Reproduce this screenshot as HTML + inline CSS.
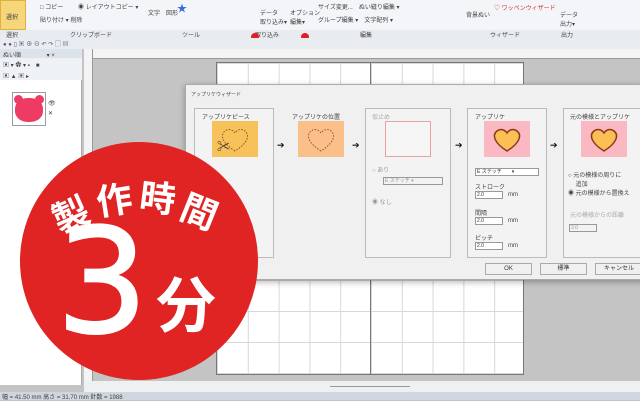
<!DOCTYPE html>
<html><head><meta charset="utf-8"><style>
*{margin:0;padding:0;box-sizing:border-box}
body{width:640px;height:400px;overflow:hidden;background:#c4c4c4;font-family:"Liberation Sans","Noto Sans CJK JP",sans-serif;position:relative;font-size:7px;color:#333}
.a{position:absolute}
.t{font-size:6px;color:#444;white-space:nowrap}
.panel{position:absolute;top:108px;height:150px;border:1px solid #bbb;background:#f3f3f3}
.img{position:absolute;width:46px;height:36px}
.arrow{position:absolute;top:140px;font-size:9px;color:#111}
.inp{position:absolute;width:28px;height:8px;background:#fff;border:1px solid #999;font-size:5px;line-height:7px;padding-left:1px}
.btn{position:absolute;top:263px;height:12px;border:1px solid #aaa;background:#f0f0f0;font-size:6px;text-align:center;line-height:10px}
.k{position:absolute;width:44px;height:44px;margin:-22px 0 0 -22px;text-align:center;line-height:44px;color:#fff;font-family:'Noto Sans CJK JP',sans-serif;font-weight:bold;font-size:36px}
</style></head><body>
<!-- ribbon -->
<div class="a" style="left:0;top:0;width:640px;height:38px;background:#f3f5f8;border-bottom:1px solid #c8ccd2"></div>
<div class="a" style="left:0;top:0;width:26px;height:30px;background:#f7d57a;border:1px solid #e0b040"></div>
<div class="a t" style="left:6px;top:12px">選択</div>
<div class="a" style="left:0;top:30px;width:640px;height:8px;background:#e8ebef"></div>
<div class="a t" style="left:6px;top:30px">選択</div>
<div class="a t" style="left:70px;top:30px">クリップボード</div>
<div class="a t" style="left:182px;top:30px">ツール</div>
<div class="a t" style="left:255px;top:30px">取り込み</div>
<div class="a t" style="left:360px;top:30px">編集</div>
<div class="a t" style="left:490px;top:30px">ウィザード</div>
<div class="a t" style="left:561px;top:30px">出力</div>
<div class="a t" style="left:40px;top:2px">□ コピー</div>
<div class="a t" style="left:78px;top:2px">◉ レイアウトコピー ▾</div>
<div class="a t" style="left:40px;top:15px">貼り付け ▾ 削除</div>
<div class="a t" style="left:148px;top:8px">文字　図形</div>
<div class="a" style="left:177px;top:0;color:#3a6fd8;font-size:10px">★</div>
<div class="a t" style="left:260px;top:8px">データ<br>取り込み▾</div>
<div class="a t" style="left:290px;top:8px">オプション<br>編集▾</div>
<div class="a t" style="left:318px;top:2px">サイズ変更...　ぬい縫り編集 ▾</div>
<div class="a t" style="left:318px;top:15px">グループ編集 ▾　文字配列 ▾</div>
<div class="a t" style="left:466px;top:10px">背景ぬい</div>
<div class="a t" style="left:494px;top:3px;color:#c33">♡ ワッペンウィザード</div>
<div class="a t" style="left:560px;top:10px">データ<br>出力▾</div>
<div class="a" style="left:251px;top:33px;width:8px;height:8px;border-radius:50%;background:#e02020"></div>
<div class="a" style="left:301px;top:33px;width:8px;height:8px;border-radius:50%;background:#e02020"></div>
<!-- toolbar -->
<div class="a" style="left:0;top:38px;width:640px;height:11px;background:#e9ecf0"></div>
<div class="a t" style="left:3px;top:39px;color:#557">● ● ▯ ▣ ⊕ ⊖ ↶ ↷ ▢ ▤</div>
<!-- ruler -->
<div class="a" style="left:84px;top:49px;width:556px;height:10px;background:#f4f4f4;border-bottom:1px solid #999"></div>
<div class="a" style="left:84px;top:49px;width:9px;height:336px;background:#f4f4f4;border-right:1px solid #999"></div>
<!-- left panel -->
<div class="a" style="left:0;top:49px;width:82px;height:336px;background:#fff;border-right:1px solid #aaa"></div>
<div class="a" style="left:0;top:49px;width:82px;height:9px;background:#dde3ea"></div>
<div class="a t" style="left:3px;top:50px">ぬい順　　　　 ▾ ×</div>
<div class="a" style="left:0;top:58px;width:82px;height:22px;background:#eef1f5"></div>
<div class="a t" style="left:3px;top:60px">▣ ▾ ✿ ▾ ▪　■</div>
<div class="a t" style="left:3px;top:71px">▣ ▲ ▣ ▸</div>
<div class="a" style="left:12px;top:92px;width:34px;height:34px;border:1px solid #99a;background:#fff"></div>
<div class="a" style="left:15px;top:98px;width:28px;height:24px;border-radius:45%;background:#ee3b63"></div>
<div class="a" style="left:14px;top:95px;width:9px;height:9px;border-radius:50%;background:#ee3b63"></div>
<div class="a" style="left:35px;top:95px;width:9px;height:9px;border-radius:50%;background:#ee3b63"></div>
<div class="a t" style="left:48px;top:100px">👁</div>
<div class="a t" style="left:48px;top:110px">✕</div>
<!-- canvas sheet -->
<div class="a" style="left:216px;top:62px;width:308px;height:313px;background:#fff;border:1px solid #777;
background-image:linear-gradient(90deg,#d8d8d8 1px,transparent 1px),linear-gradient(#d8d8d8 1px,transparent 1px);background-size:30.8px 31px"></div>
<div class="a" style="left:370px;top:62px;width:1px;height:313px;background:#777"></div>
<!-- bottom -->
<div class="a" style="left:84px;top:381px;width:556px;height:11px;background:#eef0f2"></div>
<div class="a" style="left:330px;top:386px;width:80px;height:1px;background:#999"></div>
<div class="a" style="left:0;top:392px;width:640px;height:8px;background:#cfd6df"></div>
<div class="a t" style="left:2px;top:392px">幅 = 41.50 mm 高さ = 31.70 mm 針数 = 1988</div>
<!-- dialog -->
<div class="a" style="left:185px;top:84px;width:460px;height:196px;background:#f0f0f0;border:1px solid #aaa;box-shadow:0 2px 6px rgba(0,0,0,.3)"></div>
<div class="a t" style="left:191px;top:91px;font-size:5px">アップリケウィザード</div>
<div class="panel" style="left:194px;width:80px"></div>
<div class="a t" style="left:202px;top:112px">アップリケピース</div>
<div class="img" style="left:212px;top:121px;background:#f7c25a"></div>
<svg class="a" style="left:212px;top:121px" width="46" height="36"><path d="M23 30 C10 22 8 14 13 10 C17 7 21 9 23 12 C25 9 29 7 33 10 C38 14 36 22 23 30Z" fill="none" stroke="#8a4a20" stroke-dasharray="1.5 1.5"/><text x="5" y="30" font-size="13" fill="#333">✂</text></svg>
<div class="arrow" style="left:277px">➔</div>
<div class="a t" style="left:292px;top:112px">アップリケの位置</div>
<div class="img" style="left:298px;top:121px;background:#fbbf8a"></div>
<svg class="a" style="left:298px;top:121px" width="46" height="36"><path d="M23 30 C10 22 8 14 13 10 C17 7 21 9 23 12 C25 9 29 7 33 10 C38 14 36 22 23 30Z" fill="none" stroke="#9a4a30" stroke-dasharray="1.5 1.5"/></svg>
<div class="arrow" style="left:352px">➔</div>
<div class="panel" style="left:365px;width:86px"></div>
<div class="a t" style="left:372px;top:112px;color:#aaa">仮止め</div>
<div class="img" style="left:385px;top:121px;border:1px solid #e8a0a0;background:#f6f6f6"></div>
<div class="a t" style="left:372px;top:165px;color:#999">○ あり</div>
<div class="a inp" style="left:383px;top:177px;width:60px;background:#f2f2f2;color:#999">E ステッチ ▾</div>
<div class="a t" style="left:372px;top:197px;color:#999">◉ なし</div>
<div class="arrow" style="left:455px">➔</div>
<div class="panel" style="left:467px;width:80px"></div>
<div class="a t" style="left:475px;top:112px">アップリケ</div>
<div class="img" style="left:484px;top:121px;background:#f9b8c2"></div>
<svg class="a" style="left:484px;top:121px" width="46" height="36"><path d="M23 30 C10 22 8 14 13 10 C17 7 21 9 23 12 C25 9 29 7 33 10 C38 14 36 22 23 30Z" fill="#fbbf55" stroke="#8a3a1a" stroke-width="1.5"/></svg>
<div class="a inp" style="left:475px;top:168px;width:64px">E ステッチ　　▾</div>
<div class="a t" style="left:475px;top:182px">ストローク</div>
<div class="a inp" style="left:475px;top:191px">2.0</div><div class="a t" style="left:508px;top:192px">mm</div>
<div class="a t" style="left:475px;top:208px">間隔</div>
<div class="a inp" style="left:475px;top:217px">2.0</div><div class="a t" style="left:508px;top:218px">mm</div>
<div class="a t" style="left:475px;top:233px">ピッチ</div>
<div class="a inp" style="left:475px;top:242px">2.0</div><div class="a t" style="left:508px;top:243px">mm</div>
<div class="arrow" style="left:550px">➔</div>
<div class="panel" style="left:563px;width:82px"></div>
<div class="a t" style="left:570px;top:112px">元の模様とアップリケ</div>
<div class="img" style="left:581px;top:121px;background:#f9b8c2"></div>
<svg class="a" style="left:581px;top:121px" width="46" height="36"><path d="M23 30 C10 22 8 14 13 10 C17 7 21 9 23 12 C25 9 29 7 33 10 C38 14 36 22 23 30Z" fill="#fbbf55" stroke="#8a3a1a" stroke-width="1.5"/></svg>
<div class="a t" style="left:568px;top:170px">○ 元の模様の周りに<br>　 追加</div>
<div class="a t" style="left:568px;top:188px">◉ 元の模様から置換え</div>
<div class="a t" style="left:570px;top:210px;color:#aaa">元の模様からの距離</div>
<div class="a inp" style="left:569px;top:224px;background:#f2f2f2;color:#999">3.0</div>
<div class="btn" style="left:485px;width:47px">OK</div>
<div class="btn" style="left:540px;width:47px">標準</div>
<div class="btn" style="left:595px;width:48px">キャンセル</div>
<!-- red badge -->
<div class="a" style="left:20px;top:142px;width:238px;height:238px;border-radius:50%;background:#e02424"></div>
<div class="k" style="left:70px;top:213px;transform:rotate(-24deg)">製</div>
<div class="k" style="left:114px;top:198px;transform:rotate(-9deg)">作</div>
<div class="k" style="left:158px;top:196px;transform:rotate(7deg)">時</div>
<div class="k" style="left:200px;top:210px;transform:rotate(22deg)">間</div>
<div class="a" style="left:56px;top:210px;color:#fff;font-family:'DejaVu Sans',sans-serif;font-size:145px;line-height:1;-webkit-text-stroke:2px #fff">3</div>
<div class="a" style="left:156px;top:272px;color:#fff;font-family:'Noto Sans CJK JP',sans-serif;font-weight:bold;font-size:60px;line-height:60px">分</div>
</body></html>
